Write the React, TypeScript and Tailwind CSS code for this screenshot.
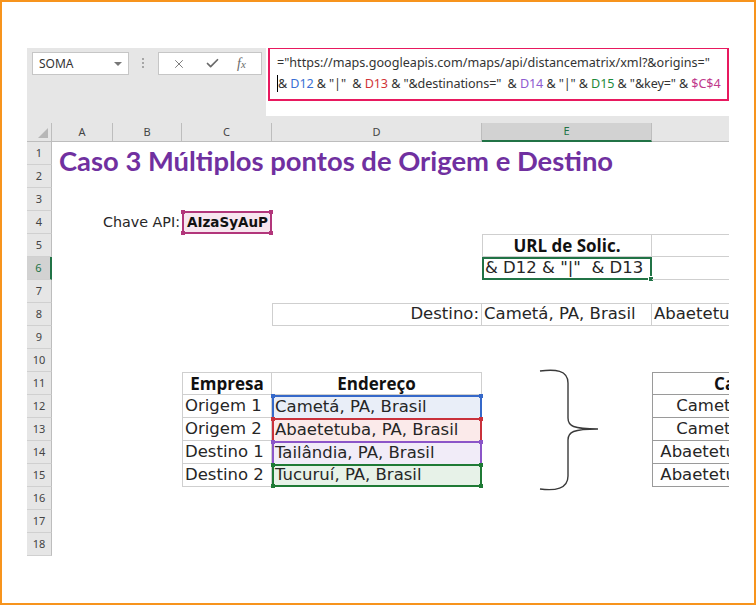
import type { ReactNode } from "react";
import { X, Check } from "lucide-react";

const W = {
  A: "w-[61px]",
  B: "w-[69px]",
  C: "w-[90px]",
  D: "w-[210px]",
  E: "w-[170px]",
  F: "w-[200px]",
} as const;
type Col = keyof typeof W;
const COLS: Col[] = ["A", "B", "C", "D", "E", "F"];

const body = "font-['DejaVu_Sans',sans-serif] text-[16.5px] text-[#262626]";
const bold = "font-['Open_Sans',sans-serif] font-bold text-[17px] text-[#111]";

function Handles({ color, bottom }: { color: string; bottom?: boolean }) {
  return (
    <>
      <span className={`absolute -left-[3px] -top-[3px] size-[4px] ${color}`} />
      <span className={`absolute -right-[3px] -top-[3px] size-[4px] ${color}`} />
      {bottom && (
        <>
          <span className={`absolute -left-[3px] -bottom-[3px] size-[4px] ${color}`} />
          <span className={`absolute -right-[3px] -bottom-[3px] size-[4px] ${color}`} />
        </>
      )}
    </>
  );
}

function Brace() {
  return (
    <svg
      className="absolute left-[57px] -top-[4px]"
      width="62"
      height="126"
      viewBox="0 0 62 126"
      fill="none"
    >
      <path
        d="M1 3 C16 1 29 2 29 15 L29 50 C29 58 34 61 59 61 M59 61 C34 61 29 64 29 72 L29 108 C29 121 16 123 1 121"
        stroke="#3a3a3a"
        strokeWidth="1.4"
      />
    </svg>
  );
}

type Spec = { className?: string; children?: ReactNode };

const ref = [
  { text: "Cametá, PA, Brasil", cls: "bg-[#e9eef8] border-[#3568c9]", h: "bg-[#3568c9]" },
  { text: "Abaetetuba, PA, Brasil", cls: "bg-[#fbeaea] border-[#c9313b]", h: "bg-[#c9313b]" },
  { text: "Tailândia, PA, Brasil", cls: "bg-[#f1ecf8] border-[#8b55c8]", h: "bg-[#8b55c8]" },
  { text: "Tucuruí, PA, Brasil", cls: "bg-[#e7f2e8] border-[#1f7a35]", h: "bg-[#1f7a35]" },
];
const empresas = ["Origem 1", "Origem 2", "Destino 1", "Destino 2"];
const combos = [
  "Cametá, PA, Brasil",
  "Cametá, PA, Brasil",
  "Abaetetuba, PA, Brasil",
  "Abaetetuba, PA, Brasil",
];

const grid = "border-[#cfcfcf]";

const sheet: Record<number, Partial<Record<Col, Spec>>> = {
  1: {
    A: {
      children: (
        <div className="whitespace-nowrap pl-[7px] pt-[5px] font-['Lato',sans-serif] text-[27.4px] leading-[28px] font-bold text-[#7030a0]">
          Caso 3 Múltiplos pontos de Origem e Destino
        </div>
      ),
    },
  },
  4: {
    B: {
      className: "flex items-center justify-end pr-[2px]",
      children: (
        <span className="whitespace-nowrap font-['DejaVu_Sans',sans-serif] text-[14.3px] text-[#262626]">
          Chave API:
        </span>
      ),
    },
    C: {
      className: "flex items-center border-2 border-[#b2367b] bg-[#f7e6ef] pl-[3px]",
      children: (
        <>
          <span className="font-['DejaVu_Sans',sans-serif] text-[13.5px] font-bold text-[#111]">AIzaSyAuP</span>
          <Handles color="bg-[#b2367b]" bottom />
        </>
      ),
    },
  },
  5: {
    E: {
      className: `flex items-center justify-center border ${grid} ${bold}`,
      children: "URL de Solic.",
    },
    F: { className: `border-t border-r border-b ${grid}` },
  },
  6: {
    E: {
      className: `flex items-center border-2 border-[#217346] pl-[1px] ${body}`,
      children: (
        <>
          <span className="whitespace-pre">{'& D12 & "|"  & D13'}</span>
          <span className="absolute -right-[4px] -bottom-[4px] size-[6px] border border-white bg-[#217346]" />
        </>
      ),
    },
    F: { className: `border-r border-b ${grid}` },
  },
  8: {
    D: {
      className: `flex items-center justify-end border pr-[2px] ${grid} ${body}`,
      children: "Destino:",
    },
    E: {
      className: `flex items-center border-t border-r border-b pl-[2px] ${grid} ${body}`,
      children: "Cametá, PA, Brasil",
    },
    F: {
      className: `flex items-center border-t border-r border-b pl-[2px] whitespace-nowrap ${grid} ${body}`,
      children: "Abaetetuba, PA, Brasil",
    },
  },
  11: {
    C: { className: `flex items-center justify-center border ${grid} ${bold}`, children: "Empresa" },
    D: {
      className: `flex items-center justify-center border-t border-r border-b ${grid} ${bold}`,
      children: "Endereço",
    },
    E: { children: <Brace /> },
    F: {
      className: `flex items-center justify-center border border-[#9a9a9a] ${bold}`,
      children: "Caminho",
    },
  },
};

empresas.forEach((e, i) => {
  const r = ref[i];
  sheet[12 + i] = {
    C: {
      className: `flex items-center border-l border-r border-b pl-[2px] ${grid} ${body}`,
      children: e,
    },
    D: {
      className: `flex items-center border-l-2 border-r-2 border-t-2 pl-[1px] ${i === 3 ? "border-b-2" : ""} ${r.cls} ${body}`,
      children: (
        <>
          <span className="whitespace-nowrap">{r.text}</span>
          <Handles color={r.h} bottom={i === 3} />
        </>
      ),
    },
    F: {
      className: `flex items-center justify-center border-l border-r border-b border-[#9a9a9a] whitespace-nowrap ${body}`,
      children: combos[i],
    },
  };
});

function ColumnHeaders() {
  return (
    <div className="flex h-[19px] font-['Noto_Sans',sans-serif] text-[11px] text-[#444]">
      <div className="relative w-[25px] shrink-0 border-r border-b border-[#bdbdbd] bg-[#e6e6e6]">
        <span className="absolute right-[3px] bottom-[3px] size-0 border-l-[10px] border-b-[10px] border-l-transparent border-b-[#b7b7b7]" />
      </div>
      {COLS.map((c) => (
        <div
          key={c}
          className={`flex shrink-0 items-center justify-center ${W[c]} ${
            c === "E"
              ? "border-r border-b-2 border-r-[#bdbdbd] border-b-[#217346] bg-[#d2d2d2] text-[#217346]"
              : "border-r border-b border-[#bdbdbd] bg-[#e6e6e6]"
          }`}
        >
          {c}
        </div>
      ))}
    </div>
  );
}

function Row({ n }: { n: number }) {
  const cells = sheet[n] ?? {};
  const active = n === 6;
  return (
    <div className="flex h-[23px]">
      <div
        className={`flex w-[25px] shrink-0 items-center justify-center border-b border-b-[#d0d0d0] font-['Noto_Sans',sans-serif] text-[11px] ${
          active
            ? "border-r-2 border-r-[#217346] bg-[#d2d2d2] text-[#217346]"
            : "border-r border-r-[#bdbdbd] bg-[#e6e6e6] text-[#444]"
        }`}
      >
        {n}
      </div>
      {COLS.map((c) => (
        <div key={c} className={`relative h-full shrink-0 ${W[c]} ${cells[c]?.className ?? ""}`}>
          {cells[c]?.children}
        </div>
      ))}
    </div>
  );
}

function FormulaBar() {
  return (
    <div className="flex h-[75px] items-start bg-[#e6e6e6] font-['Noto_Sans',sans-serif]">
      <div className="mt-[4px] ml-[5px] flex h-[23px] w-[97px] items-center justify-between border border-[#c6c6c6] bg-white pr-[6px] pl-[6px] text-[12px] text-[#333]">
        <span>SOMA</span>
        <span className="size-0 border-x-[4px] border-t-[4px] border-x-transparent border-t-[#777]" />
      </div>
      <div className="mt-[10px] ml-[13px] flex flex-col gap-[2px]">
        <span className="size-[2px] bg-[#a6a6a6]" />
        <span className="size-[2px] bg-[#a6a6a6]" />
        <span className="size-[2px] bg-[#a6a6a6]" />
      </div>
      <div className="mt-[4px] ml-[14px] flex h-[23px] w-[104px] items-center border border-[#c6c6c6] bg-white text-[#6a6a6a]">
        <X className="ml-[13px]" size={14} strokeWidth={1.5} />
        <Check className="ml-[19px]" size={15} strokeWidth={2.8} />
        <span className="ml-[17px] font-['Liberation_Serif',serif] text-[14px] italic">
          f<span className="text-[11px]">x</span>
        </span>
      </div>
      <div className="ml-[4px] h-[68px] w-[463px] bg-white">
        <div className="-mt-px ml-[2px] h-[54px] w-[461px] border-2 border-[#e8195f] pt-[3px] pl-[7px] text-[12.6px] leading-[21px] whitespace-pre text-[#333]">
          <div>{'="https://maps.googleapis.com/maps/api/distancematrix/xml?&origins="'}</div>
          <div className="tracking-[-0.1px]">
            <span className="border-l border-black">&amp; </span>
            <span className="text-[#3b6fd4]">D12</span>
            {' & "|"  & '}
            <span className="text-[#d13438]">D13</span>
            {' & "&destinations="  & '}
            <span className="text-[#8e5bd0]">D14</span>
            {' & "|" & '}
            <span className="text-[#1e8a3a]">D15</span>
            {' & "&key=" & '}
            <span className="text-[#c0398c]">$C$4</span>
          </div>
        </div>
      </div>
    </div>
  );
}

export default function App() {
  return (
    <div className="h-[605px] w-[756px] overflow-hidden border-2 border-[#f7941d] bg-white pt-[46px] pl-[25px]">
      <div className="w-[702px] overflow-hidden">
        <FormulaBar />
        <ColumnHeaders />
        {Array.from({ length: 18 }, (_, i) => (
          <Row key={i + 1} n={i + 1} />
        ))}
      </div>
    </div>
  );
}
